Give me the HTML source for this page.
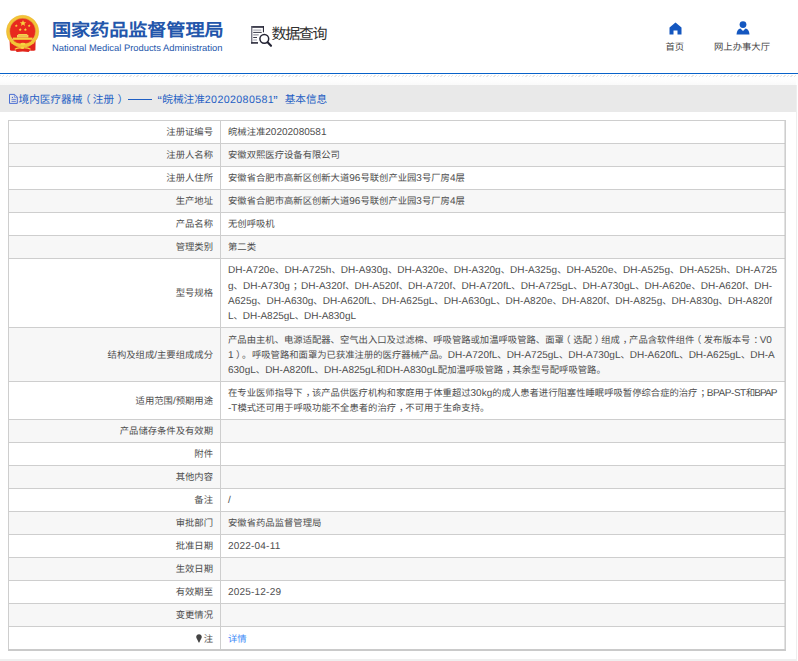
<!DOCTYPE html>
<html lang="zh-CN">
<head>
<meta charset="utf-8">
<style>
html,body{margin:0;padding:0;background:#fff;}
body{width:798px;height:661px;overflow:hidden;position:relative;font-family:"Liberation Sans",sans-serif;color:#444;text-rendering:geometricPrecision;}
.abs{position:absolute;white-space:nowrap;}
#title{left:52px;top:20px;font-size:19px;font-weight:bold;color:#2356ab;line-height:26px;letter-spacing:-0.15px;transform:scale(1.011,0.912);transform-origin:0 0;}
#sub{left:52px;top:41px;font-size:9.4px;color:#2356ab;line-height:14px;}
#query{left:271.6px;top:23.4px;font-size:15px;color:#303030;line-height:24px;letter-spacing:-1.4px;}
.nav{font-size:9.33px;color:#444;line-height:12px;top:40.7px;}
#blue{left:0;top:72.7px;width:798px;height:1.4px;background:#0862c9;}
#hatch{left:0;top:75px;width:798px;height:2px;background:repeating-linear-gradient(135deg,#e6e6e6 0 0.9px,transparent 0.9px 2.5px);}
#frame{left:-2px;top:85px;width:798px;height:574px;border-right:1px solid #eeeeee;border-bottom:2px solid #efefef;}
#grad{left:0;top:79px;width:796px;height:6px;background:linear-gradient(#fff,#fafafa);}
#bar{left:0;top:85px;width:796px;height:26.5px;background:#e9e9e9;}
#bartxt span{position:absolute;top:87px;font-size:10.65px;line-height:26.5px;color:#1f5fc4;white-space:nowrap;}
table{position:absolute;left:8px;top:120px;width:778px;border-collapse:collapse;table-layout:fixed;font-size:9.33px;line-height:15.4px;color:#4d4d4d;text-rendering:geometricPrecision;}
td{border:1px solid #cecece;padding:2px 0 0 7px;vertical-align:middle;white-space:nowrap;overflow:hidden;}
td.l{text-align:right;width:204px;padding:2px 7px 0 0;}
td i{font-style:normal;font-size:10px;}
td em{font-style:normal;position:relative;}
em.a{left:-2.5px;}
em.b{left:3px;}
tr{height:23px;}
tr:nth-child(even) td{background:#f7f7f7;}
tr:last-child td{border-bottom:2px solid #cacaca;}
a{color:#3d8af7;text-decoration:none;}
tr:last-child td{padding-top:4px;}
tr.r8 td{line-height:15px;padding-top:2.2px;}
tr.r9 td{line-height:14.2px;padding-top:1.8px;}
</style>
</head>
<body>
<!-- emblem -->
<svg class="abs" style="left:0;top:10px" width="48" height="46" viewBox="0 10 48 46">
  <path d="M9.6 40.5 L35.6 40.5 L35.4 50.2 Q33 51.3 30 50.6 L28.6 52 Q22.7 50.8 16.8 52 L15.4 50.6 Q12.4 51.3 10 50.2 Z" fill="#e2251b"/>
  <circle cx="22.6" cy="31.4" r="14.55" fill="none" stroke="#f3c437" stroke-width="3.3"/>
  <circle cx="22.6" cy="31.4" r="16.1" fill="none" stroke="#e9b63a" stroke-width="0.5"/>
  <circle cx="22.6" cy="31.2" r="12.9" fill="#e8291e"/>
  <circle cx="22.6" cy="31.2" r="12.9" fill="none" stroke="#d4a02a" stroke-width="0.45"/>
  <polygon points="23,19.9 23.9,22.2 26.2,22.2 24.4,23.7 25.1,26 23,24.6 20.9,26 21.6,23.7 19.8,22.2 22.1,22.2" fill="#f8d440"/>
  <polygon points="16.3,24.2 16.75,25.2 17.8,25.3 17,26 17.2,27 16.3,26.5 15.4,27 15.6,26 14.8,25.3 15.85,25.2" fill="#f8d440"/>
  <polygon points="29.2,24.2 29.65,25.2 30.7,25.3 29.9,26 30.1,27 29.2,26.5 28.3,27 28.5,26 27.7,25.3 28.75,25.2" fill="#f8d440"/>
  <polygon points="20.2,28.1 20.65,29.1 21.7,29.2 20.9,29.9 21.1,30.9 20.2,30.4 19.3,30.9 19.5,29.9 18.7,29.2 19.75,29.1" fill="#f8d440"/>
  <polygon points="25.4,28.1 25.85,29.1 26.9,29.2 26.1,29.9 26.3,30.9 25.4,30.4 24.5,30.9 24.7,29.9 23.9,29.2 24.95,29.1" fill="#f8d440"/>
  <path d="M17.6 35 L18.6 33.9 H26.8 L27.8 35 Z" fill="#f6d24a"/>
  <rect x="17" y="35" width="11.4" height="2.6" fill="#f3cf5a"/>
  <rect x="18.3" y="35.6" width="8.8" height="0.6" fill="#e0a83a"/>
  <rect x="12.9" y="37.6" width="19.6" height="2.2" fill="#f6d040"/>
  <path d="M11.8 42.6 Q22.6 47.6 33.4 42.6" stroke="#f3c437" stroke-width="2.2" fill="none"/>
  <ellipse cx="22.9" cy="44" rx="2.6" ry="1.3" fill="#f8d440"/>
  <path d="M14.8 49.2 Q18.5 47.6 20.4 48" stroke="#f8d440" stroke-width="1.1" fill="none"/>
  <path d="M30.6 49.2 Q26.9 47.6 25 48" stroke="#f8d440" stroke-width="1.1" fill="none"/>
  <ellipse cx="22.4" cy="47.9" rx="2.4" ry="1.1" fill="#f8d440"/>
</svg>
<div id="title" class="abs">国家药品监督管理局</div>
<div id="sub" class="abs">National Medical Products Administration</div>

<!-- query icon -->
<svg class="abs" style="left:246px;top:22px" width="30" height="28" viewBox="246 22 30 28">
  <rect x="251.1" y="26.1" width="12.9" height="1.7" fill="#2b2b3b"/>
  <rect x="251.1" y="26.1" width="1.3" height="17.5" fill="#6a6a78"/>
  <rect x="262.9" y="26.1" width="1.1" height="6.2" fill="#2b2b3b"/>
  <rect x="251.1" y="42.1" width="6.9" height="1.6" fill="#2b2b3b"/>
  <rect x="253.2" y="29.6" width="8.1" height="1" fill="#9a9aa6"/>
  <rect x="253.2" y="31.9" width="8.5" height="1" fill="#3a3a48"/>
  <rect x="253.2" y="34.4" width="5.5" height="1" fill="#7a7a88"/>
  <rect x="253.2" y="37" width="3.8" height="1" fill="#3a3a48"/>
  <rect x="253.2" y="39.5" width="3.8" height="1" fill="#a0a0ac"/>
  <circle cx="264.3" cy="38.8" r="4.4" stroke="#232333" stroke-width="1.5" fill="#fff"/>
  <path d="M267.6 42.2 L271 45.8" stroke="#232333" stroke-width="2.1" stroke-linecap="round"/>
</svg>
<div id="query" class="abs">数据查询</div>

<!-- nav -->
<svg class="abs" style="left:669px;top:21.5px" width="13" height="13" viewBox="0 0 13 13">
  <path d="M6.5 0.5 L12.5 5.5 V12.5 H8.5 V8.5 H4.5 V12.5 H0.5 V5.5 Z" fill="#1457c0"/>
</svg>
<div class="abs nav" style="left:665.5px">首页</div>
<svg class="abs" style="left:736px;top:21px" width="14" height="14" viewBox="0 0 14 14">
  <circle cx="7" cy="3.6" r="3.4" fill="#1457c0"/>
  <path d="M0.5 13.5 Q1 8 4.5 7.5 L7 10 L9.5 7.5 Q13 8 13.5 13.5 Z" fill="#1457c0"/>
</svg>
<div class="abs nav" style="left:714px">网上办事大厅</div>

<div id="blue" class="abs"></div>
<div id="hatch" class="abs"></div>
<div id="frame" class="abs"></div>
<div id="grad" class="abs"></div>
<div id="bar" class="abs"></div>
<svg class="abs" style="left:5px;top:90px" width="16" height="18" viewBox="5 90 16 18">
  <path d="M9.5 94.4 H14.6 L17.3 97.1 V103.4 H9.5 Z" stroke="#3a62cf" stroke-width="0.9" fill="none" stroke-linejoin="round"/>
  <path d="M14.4 94.6 V97.3 H17.1" stroke="#5a78d8" stroke-width="0.7" fill="none"/>
  <circle cx="12.4" cy="97.4" r="0.6" fill="#3a62cf"/>
  <path d="M11.5 99.4 H15.9 M11.5 101.4 H15.9" stroke="#4a6ad2" stroke-width="0.8"/>
</svg>
<div id="bartxt">
<span style="left:18.5px">境内医疗器械</span>
<span style="left:80px">（</span>
<span style="left:92.8px">注册</span>
<span style="left:117.5px">）</span>
<span style="left:128.2px;top:99px;width:23.8px;height:1.1px;background:#1f5fc4"></span>
<span style="left:157.6px;font-size:13px;top:88px">“</span>
<span style="left:162.3px">皖械注准</span>
<span style="left:204.8px;letter-spacing:0.38px">20202080581</span>
<span style="left:273.3px;font-size:13px;top:88px">”</span>
<span style="left:284.7px">基本信息</span>
</div>

<table>
<tr><td class="l">注册证编号</td><td>皖械注准<i>20202080581</i></td></tr>
<tr><td class="l">注册人名称</td><td>安徽双熙医疗设备有限公司</td></tr>
<tr><td class="l">注册人住所</td><td>安徽省合肥市高新区创新大道<i>96</i>号联创产业园<i>3</i>号厂房<i>4</i>层</td></tr>
<tr><td class="l">生产地址</td><td>安徽省合肥市高新区创新大道<i>96</i>号联创产业园<i>3</i>号厂房<i>4</i>层</td></tr>
<tr><td class="l">产品名称</td><td>无创呼吸机</td></tr>
<tr><td class="l">管理类别</td><td>第二类</td></tr>
<tr class="r7" style="height:69px"><td class="l">型号规格</td><td><span style="letter-spacing:0.043px"><i>DH-A720e</i>、<i>DH-A725h</i>、<i>DH-A930g</i>、<i>DH-A320e</i>、<i>DH-A320g</i>、<i>DH-A325g</i>、<i>DH-A520e</i>、<i>DH-A525g</i>、<i>DH-A525h</i>、<i>DH-A725</i></span><br><span style="letter-spacing:0.031px"><i>g</i>、<i>DH-A730g</i><span style="margin-left:3.1px;margin-right:-1.3px">；</span><i>DH-A320f</i>、<i>DH-A520f</i>、<i>DH-A720f</i>、<i>DH-A720fL</i>、<i>DH-A725gL</i>、<i>DH-A730gL</i>、<i>DH-A620e</i>、<i>DH-A620f</i>、<i>DH-</i></span><br><span style="letter-spacing:0.029px"><i>A625g</i>、<i>DH-A630g</i>、<i>DH-A620fL</i>、<i>DH-A625gL</i>、<i>DH-A630gL</i>、<i>DH-A820e</i>、<i>DH-A820f</i>、<i>DH-A825g</i>、<i>DH-A830g</i>、<i>DH-A820f</i></span><br><span style="letter-spacing:-0.04px"><i>L</i>、<i>DH-A825gL</i>、<i>DH-A830gL</i></span></td></tr>
<tr class="r8" style="height:54px"><td class="l">结构及组成<i>/</i>主要组成成分</td><td>产品由主机、电源适配器、空气出入口及过滤棉、呼吸管路或加温呼吸管路、面罩<em class="a">（</em>选配<em class="b">）</em>组成<em class="b">，</em>产品含软件组件<em class="a">（</em>发布版本号<em class="b">：</em><i>V0</i><br><i>1</i><span style="margin-left:2.5px">）</span><span style="margin-left:1.3px;margin-right:0.6px">。</span>呼吸管路和面罩为已获准注册的医疗器械产品。<i>DH-A720fL</i>、<i>DH-A725gL</i>、<i>DH-A730gL</i>、<i>DH-A620fL</i>、<i>DH-A625gL</i>、<i>DH-A</i><br><i>630gL</i>、<i>DH-A820fL</i>、<i>DH-A825gL</i>和<i>DH-A830gL</i>配加温呼吸管路<em class="b">，</em>其余型号配呼吸管路。</td></tr>
<tr class="r9" style="height:38px"><td class="l">适用范围<i>/</i>预期用途</td><td>在专业医师指导下<em class="b">，</em>该产品供医疗机构和家庭用于体重超过<i>30kg</i>的成人患者进行阻塞性睡眠呼吸暂停综合症的治疗<em class="b">；</em><i style="letter-spacing:-0.43px">BPAP-ST</i><span style="margin-right:-1px">和</span><i style="letter-spacing:-0.9px">BPAP</i><br><i>-T</i>模式还可用于呼吸功能不全患者的治疗<em class="b">，</em>不可用于生命支持。</td></tr>
<tr><td class="l">产品储存条件及有效期</td><td></td></tr>
<tr><td class="l">附件</td><td></td></tr>
<tr><td class="l">其他内容</td><td></td></tr>
<tr><td class="l">备注</td><td><i>/</i></td></tr>
<tr><td class="l">审批部门</td><td>安徽省药品监督管理局</td></tr>
<tr><td class="l">批准日期</td><td><span style="letter-spacing:0.2px"><i>2022-04-11</i></span></td></tr>
<tr><td class="l">生效日期</td><td></td></tr>
<tr><td class="l">有效期至</td><td><span style="letter-spacing:0.2px"><i>2025-12-29</i></span></td></tr>
<tr><td class="l">变更情况</td><td></td></tr>
<tr><td class="l"><svg width="6" height="9" viewBox="0 0 6 9" style="vertical-align:-0.5px;margin-right:1.5px"><path d="M3 0.3 C4.6 0.3 5.8 1.5 5.8 3.1 C5.8 4.6 4.2 5.8 3.4 8.6 L2.6 8.6 C1.8 5.8 0.2 4.6 0.2 3.1 C0.2 1.5 1.4 0.3 3 0.3 Z" fill="#444"/></svg>注</td><td><a>详情</a></td></tr>
</table>
<div class="abs" style="left:784px;top:121px;width:1px;height:528px;background:rgba(190,190,190,0.45)"></div>
</body>
</html>
